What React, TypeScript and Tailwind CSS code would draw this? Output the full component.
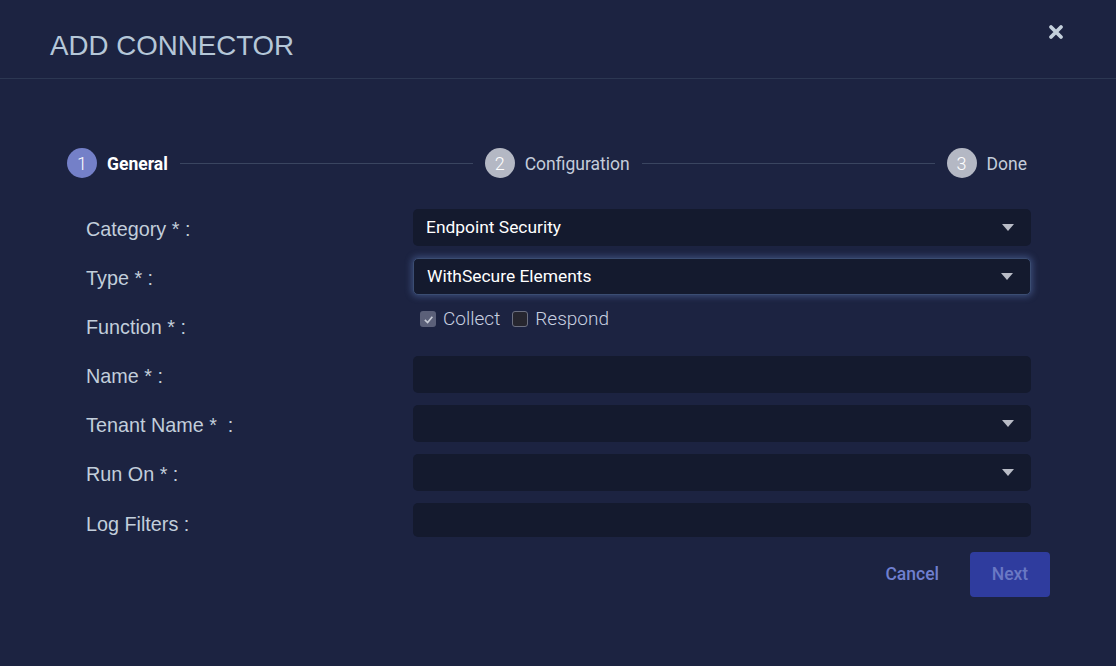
import React from "react";

const Caret = () => (
  <svg width="12" height="7" viewBox="0 0 12 7" className="shrink-0">
    <path d="M0 0 L12 0 L6 7 Z" fill="#b9bcc6" />
  </svg>
);

const Step = ({ n, label, active }: { n: number; label: string; active?: boolean }) => (
  <div className="flex items-center gap-[10px] shrink-0">
    <div
      className={
        "w-[30px] h-[30px] rounded-full flex items-center justify-center text-[18px] font-light text-white " +
        (active ? "bg-[#7480c8]" : "bg-[#b4b8c4]")
      }
    >
      {n}
    </div>
    <span className={"text-[17.5px] leading-[22px] pt-[2px] " + (active ? "text-white font-bold" : "text-[#c4ccda]")}>{label}</span>
  </div>
);

const Line = () => <div className="flex-1 h-px bg-[#3a4560] mx-[12px]" />;

const labelFont = { fontFamily: '"Liberation Sans", Arial, sans-serif' };

const Label = ({ children, pt = "pt-[7px]" }: { children: React.ReactNode; pt?: string }) => (
  <div className={"w-[327px] shrink-0 text-[19.8px] leading-[26px] text-[#c2cedb] " + pt} style={labelFont}>
    {children}
  </div>
);

const Select = ({ value, focused }: { value?: string; focused?: boolean }) => (
  <div
    className={
      "w-[618px] h-[37px] rounded-[5px] bg-[#141a2e] flex items-center justify-between pl-[13px] pr-[17px] " +
      (focused ? "shadow-[0_0_6px_2px_rgba(90,120,180,0.45)] border border-[#3b4d72]" : "")
    }
  >
    <span className="text-[17.4px] text-white">{value}</span>
    <Caret />
  </div>
);

export default function App() {
  return (
    <div className="w-[1116px] h-[666px] bg-[#1c2341] overflow-hidden" style={{ fontFamily: 'Roboto, "Noto Sans", sans-serif' }}>
      <div className="h-[79px] border-b border-[#2c3752] flex items-start justify-between">
        <h1
          className="pl-[50px] pt-[30px] text-[27.7px] leading-[32px] text-[#b5c7d8]"
          style={labelFont}
        >
          ADD CONNECTOR
        </h1>
        <div className="pr-[52px] pt-[24px]">
          <svg width="16" height="16" viewBox="0 0 16 16">
            <path d="M3 3 L13 13 M13 3 L3 13" stroke="#c4d0dc" strokeWidth="3.8" strokeLinecap="round" />
          </svg>
        </div>
      </div>

      <div className="flex items-center pl-[67px] pr-[89px] mt-[69px]">
        <Step n={1} label="General" active />
        <Line />
        <Step n={2} label="Configuration" />
        <Line />
        <Step n={3} label="Done" />
      </div>

      <div className="pl-[86px] mt-[31px] flex flex-col gap-[12px]">
        <div className="flex">
          <Label>Category * :</Label>
          <Select value="Endpoint Security" />
        </div>
        <div className="flex">
          <Label>Type * :</Label>
          <Select value="WithSecure Elements" focused />
        </div>
        <div className="flex h-[37px]">
          <Label>Function * :</Label>
          <div className="flex items-start gap-[12px] pl-[7px] pt-[2px] text-[19px] font-light text-[#c9d0e0] leading-[20px]">
            <div className="flex items-center gap-[7px]">
              <div className="w-[16px] h-[16px] rounded-[3px] bg-[#5b6079] flex items-center justify-center">
                <svg width="11" height="11" viewBox="0 0 12 12">
                  <path d="M2 6.5 L5 9.3 L10.2 3" stroke="#c7cbd6" strokeWidth="1.8" fill="none" />
                </svg>
              </div>
              <span>Collect</span>
            </div>
            <div className="flex items-center gap-[7px]">
              <div className="w-[16px] h-[16px] rounded-[3px] bg-[#26262f] border border-[#6b6f80]" />
              <span>Respond</span>
            </div>
          </div>
        </div>
        <div className="flex">
          <Label>Name * :</Label>
          <div className="w-[618px] h-[37px] rounded-[5px] bg-[#141a2e]" />
        </div>
        <div className="flex">
          <Label>Tenant Name * &nbsp;:</Label>
          <Select />
        </div>
        <div className="flex">
          <Label>Run On * :</Label>
          <Select />
        </div>
        <div className="flex">
          <Label pt="pt-[8px]">Log Filters :</Label>
          <div className="w-[618px] h-[34px] rounded-[5px] bg-[#141a2e]" />
        </div>
      </div>

      <div className="flex justify-end items-center pr-[66px] mt-[15px] gap-[31px]">
        <span className="text-[17.5px] font-medium text-[#6f7fcf]">Cancel</span>
        <div className="w-[80px] h-[45px] rounded-[4px] bg-[#2f3c9e] flex items-center justify-center text-[17.5px] font-medium text-[#6a78c4]">
          Next
        </div>
      </div>
    </div>
  );
}
